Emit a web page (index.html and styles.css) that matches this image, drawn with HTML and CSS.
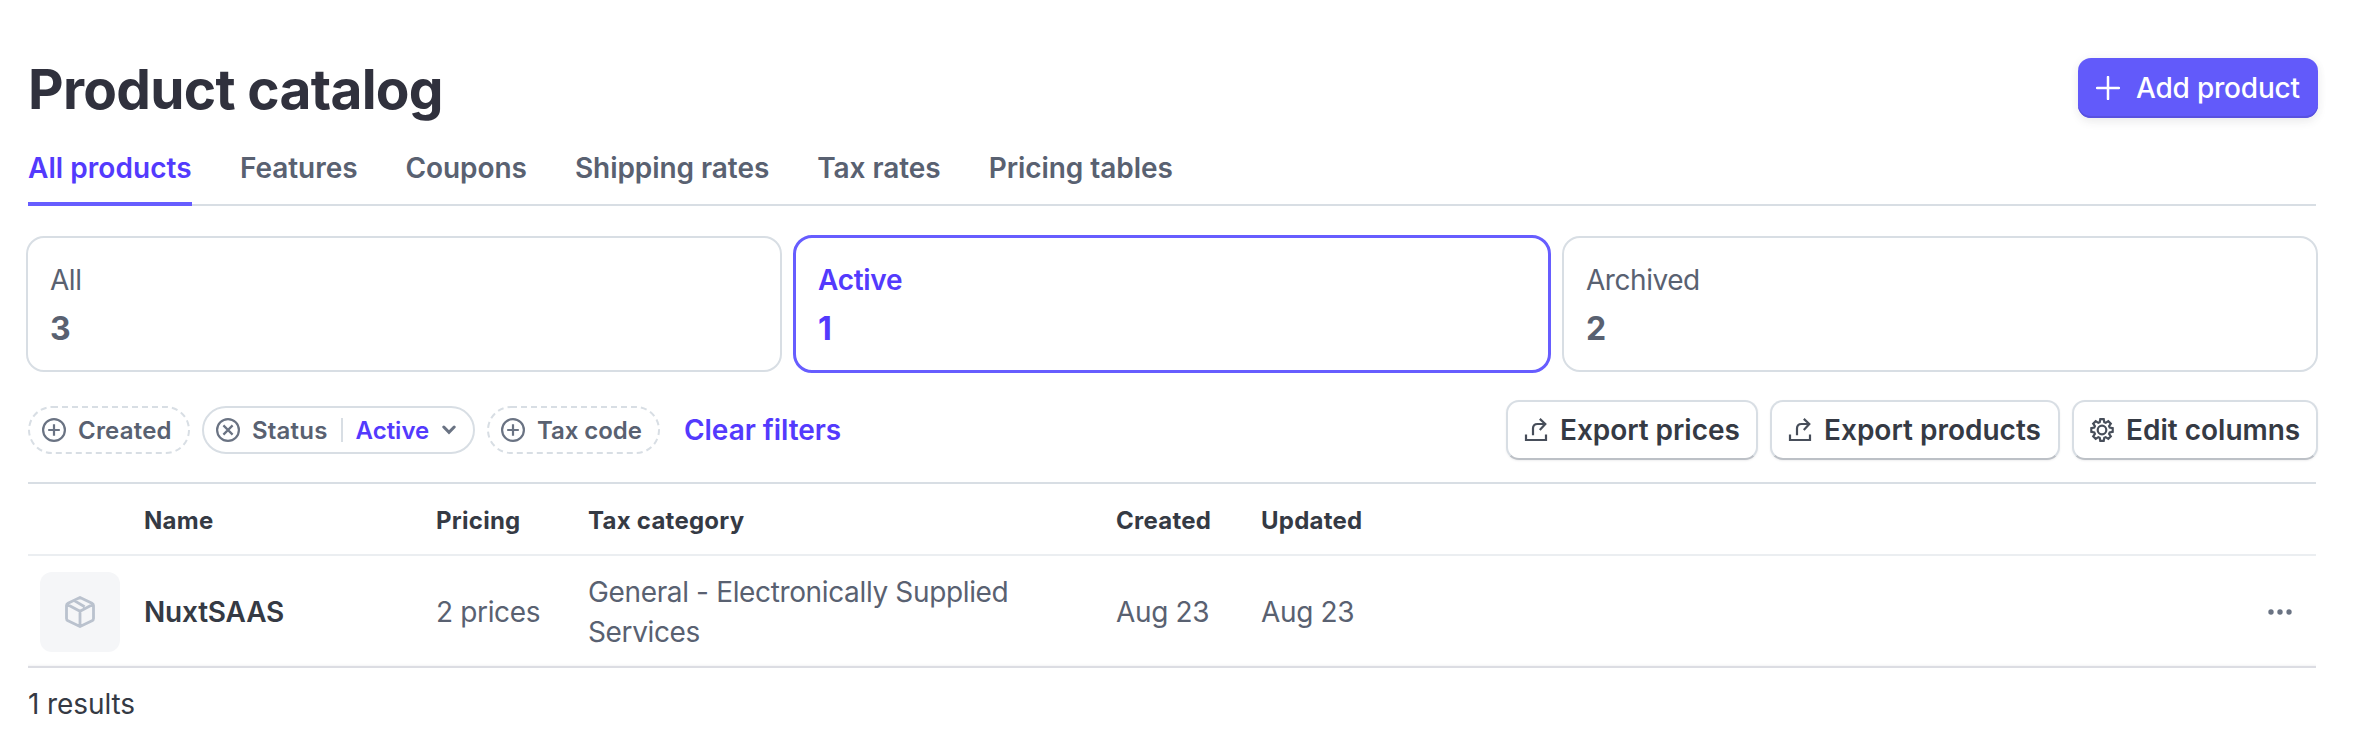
FILE: index.html
```
<!DOCTYPE html>
<html lang="en">
<head>
<meta charset="utf-8">
<title>Product catalog</title>
<link rel="stylesheet" href="styles.css">
</head>
<body>
<svg width="0" height="0" class="defs" aria-hidden="true">
  <symbol id="plus-circle" viewBox="0 0 24 24"><circle cx="12" cy="12" r="10.9"/><path d="M12 6.2v11.6M6.2 12h11.6"/></symbol>
  <symbol id="x-circle" viewBox="0 0 24 24"><circle cx="12" cy="12" r="10.9"/><path d="M7.4 7.4l9.2 9.2M16.6 7.4l-9.2 9.2"/></symbol>
  <symbol id="export" viewBox="0 0 24 24"><path d="M2 16.500V22h20v-5.500M9 17.200V10.500Q9 6 13.500 6H21M15.800 .9L21.300 6l-5.500 6"/></symbol>
</svg>
<main class="page">
  <header class="header">
    <h1>Product catalog</h1>
    <button class="add"><svg viewBox="0 0 24 24" width="24" height="24"><path d="M12 1v22M1 12h22"/></svg><span>Add product</span></button>
  </header>
  <nav class="tabs">
    <a class="tab selected">All products</a>
    <a class="tab">Features</a>
    <a class="tab">Coupons</a>
    <a class="tab">Shipping rates</a>
    <a class="tab">Tax rates</a>
    <a class="tab">Pricing tables</a>
  </nav>
  <section class="cards">
    <div class="card"><span class="label">All</span><span class="count">3</span></div>
    <div class="card active"><span class="label">Active</span><span class="count">1</span></div>
    <div class="card"><span class="label">Archived</span><span class="count">2</span></div>
  </section>
  <section class="toolbar">
    <div class="filters">
      <div class="chip created"><svg class="chip-bg" width="162" height="48"><rect x="1" y="1" width="160" height="46" rx="23"/></svg><svg class="icon"><use href="#plus-circle"/></svg><span>Created</span></div>
      <div class="chip solid"><svg class="icon"><use href="#x-circle"/></svg><span>Status</span><i class="divider"></i><span class="value">Active</span><svg class="chevron" viewBox="0 0 14 10" width="14" height="10"><path d="M1.800 2L7 7.400 12.200 2"/></svg></div>
      <div class="chip tax"><svg class="chip-bg" width="173" height="48"><rect x="1" y="1" width="171" height="46" rx="23"/></svg><svg class="icon"><use href="#plus-circle"/></svg><span>Tax code</span></div>
      <a class="clear">Clear filters</a>
    </div>
    <div class="actions">
      <button class="btn prices"><svg class="icon"><use href="#export"/></svg><span>Export prices</span></button>
      <button class="btn products"><svg class="icon"><use href="#export"/></svg><span>Export products</span></button>
      <button class="btn columns"><svg class="icon gear" viewBox="0 0 24 24"><circle cx="12" cy="12" r="4.300"/><path d="M10.300 1.200h3.400l.6 3 1.400.6 2.600-1.700 2.500 2.500-1.700 2.600.6 1.400 3 .6v3.600l-3 .6-.6 1.400 1.700 2.600-2.500 2.500-2.600-1.700-1.400.6-.6 3h-3.400l-.6-3-1.400-.6-2.600 1.700-2.500-2.500 1.700-2.600-.6-1.400-3-.6v-3.600l3-.6.6-1.400-1.700-2.600 2.500-2.500 2.600 1.700 1.400-.6z"/></svg><span>Edit columns</span></button>
    </div>
  </section>
  <section class="table">
    <div class="row head"><span></span><span>Name</span><span>Pricing</span><span>Tax category</span><span>Created</span><span>Updated</span><span></span></div>
    <div class="row body">
      <div class="thumb"><svg viewBox="0 0 32 34" width="32" height="34"><path d="M16 2.500L28 8.200Q29.500 9 29.500 10.500v13Q29.500 25 28 25.800L16 31.500 4 25.800Q2.500 25 2.500 23.500v-13Q2.500 9 4 8.200zM3.300 9.500L16 16.300 28.700 9.500M16 16.300V31.500M10.300 5.600L20.600 11.800"/></svg></div>
      <strong>NuxtSAAS</strong><span>2 prices</span><span class="category">General - Electronically Supplied Services</span><span>Aug 23</span><span>Aug 23</span>
      <svg class="dots" viewBox="0 0 24 6" width="24" height="6"><circle cx="3" cy="3" r="2.700"/><circle cx="12" cy="3" r="2.700"/><circle cx="21" cy="3" r="2.700"/></svg>
    </div>
  </section>
  <footer class="results">1 results</footer>
</main>
</body>
</html>
```
FILE: styles.css
```
* { box-sizing: border-box; }
body {
  margin: 0;
  background: #fff;
  color: #596171;
  font: 400 28px/40px Inter, "Liberation Sans", sans-serif;
}
.defs { display: block; }
svg { flex: none; fill: none; stroke: currentColor; }
button { font: inherit; white-space: nowrap; }
.page { padding: 58px 42px 0 28px; }

.header { display: flex; justify-content: space-between; height: 86px; }
h1 {
  margin: 0;
  font-size: 55px;
  font-weight: 700;
  line-height: 62px;
  letter-spacing: -0.7px;
  color: #30313d;
}
.add {
  display: flex;
  align-items: center;
  gap: 16px;
  width: 240px;
  height: 60px;
  padding: 0 0 0 18px;
  border: 0;
  border-radius: 13px;
  background: #625afa;
  color: #fff;
  font-weight: 500;
  letter-spacing: -0.2px;
  box-shadow: inset 0 -2px 0 #5851df, 0 4px 10px rgba(48, 49, 61, .08), 0 0 12px rgba(48, 49, 61, .03);
}
.add svg { stroke-width: 2.500; stroke-linecap: round; }

.tabs {
  display: flex;
  gap: 48px;
  height: 62px;
  margin-right: 2px;
  padding-top: 4px;
  border-bottom: 2px solid #d8dee4;
}
.tab { height: 58px; font-weight: 600; line-height: 41px; letter-spacing: -0.06px; white-space: nowrap; }
.tab.selected { width: 164px; letter-spacing: 0.05px; color: #533afd; border-bottom: 4px solid #675dff; }

.cards {
  display: grid;
  grid-template-columns: repeat(3, 1fr);
  gap: 12px;
  margin: 30px 0 0 -2px;
}
.card {
  display: flex;
  flex-direction: column;
  height: 136px;
  padding: 22px 22px 0;
  border: 2px solid #d8dee4;
  border-radius: 18px;
}
.label { line-height: 41px; letter-spacing: -0.45px; }
.count { margin-top: 8px; font-size: 32px; font-weight: 700; line-height: 40px; }
.card.active {
  margin: -1px;
  height: 138px;
  border: 3px solid #675dff;
  border-radius: 19px;
  color: #533afd;
}
.active .label { font-weight: 600; letter-spacing: -0.3px; }

.toolbar { display: flex; justify-content: space-between; margin-top: 28px; height: 60px; }
.filters, .actions { display: flex; align-items: center; gap: 12px; }
.icon { width: 24px; height: 24px; stroke-width: 2.200; }
.chip {
  position: relative;
  display: flex;
  align-items: center;
  height: 48px;
  padding-left: 14px;
  border-radius: 24px;
  color: #596171;
  font-size: 24px;
  font-weight: 600;
  letter-spacing: 0.2px;
  white-space: nowrap;
}
.chip span { padding-top: 1px; }
.chip .icon { margin-right: 12px; color: #6a7383; }
.chip-bg { position: absolute; inset: 0; stroke: #d8dee4; stroke-width: 2; stroke-dasharray: 6 4; }
.created { width: 162px; }
.tax { width: 173px; letter-spacing: -0.05px; }
.solid { width: 273px; padding-left: 12px; border: 2px solid #d8dee4; }
.divider { width: 2px; height: 24px; margin: 0 13px 0 13px; background: #d8dee4; }
.value { color: #533afd; letter-spacing: 0; }
.chevron { margin-left: 13px; stroke: #6a7383; stroke-width: 3; stroke-linecap: round; }
.clear { margin-left: 12px; color: #533afd; font-weight: 600; letter-spacing: -0.05px; white-space: nowrap; }

.btn {
  display: flex;
  align-items: center;
  gap: 12px;
  height: 60px;
  padding: 0 0 0 16px;
  border: 2px solid #d8dee4;
  border-bottom-color: #bcc0c6;
  border-radius: 13px;
  background: #fff;
  color: #353a44;
  font-weight: 600;
  box-shadow: 0 1px 2px rgba(48, 49, 61, .08);
}
.btn .icon { color: #474e5a; }
.prices { width: 252px; letter-spacing: -0.05px; }
.products { width: 290px; }
.columns { width: 246px; }

.table { margin: 22px 2px 0 0; border-top: 2px solid #d8dee4; }
.row {
  display: grid;
  grid-template-columns: 116px 292px 152px 528px 145px 1fr 48px;
  align-items: center;
}
.head {
  height: 72px;
  padding-top: 4px;
  border-bottom: 2px solid #ebeef1;
  color: #353a44;
  font-size: 24px;
  font-weight: 700;
  letter-spacing: 0.25px;
}
.body {
  height: 112px;
  padding-top: 2px;
  border-bottom: 2px solid #dcdde3;
  letter-spacing: -0.36px;
  box-shadow: inset 0 -3px 3px -3px rgba(48, 49, 61, .1);
}
.thumb {
  display: flex;
  align-items: center;
  justify-content: center;
  width: 80px;
  height: 80px;
  margin-left: 12px;
  border-radius: 12px;
  background: #f5f6f8;
  color: #bac2ce;
}
.thumb svg { stroke-width: 2.800; stroke-linejoin: round; }
.body strong { color: #353a44; font-weight: 600; letter-spacing: -0.2px; }
.category { width: 440px; }
.dots { fill: #6a7383; stroke: none; }
.results { margin-top: 16px; color: #353a44; letter-spacing: -0.1px; line-height: 41px; }
```
